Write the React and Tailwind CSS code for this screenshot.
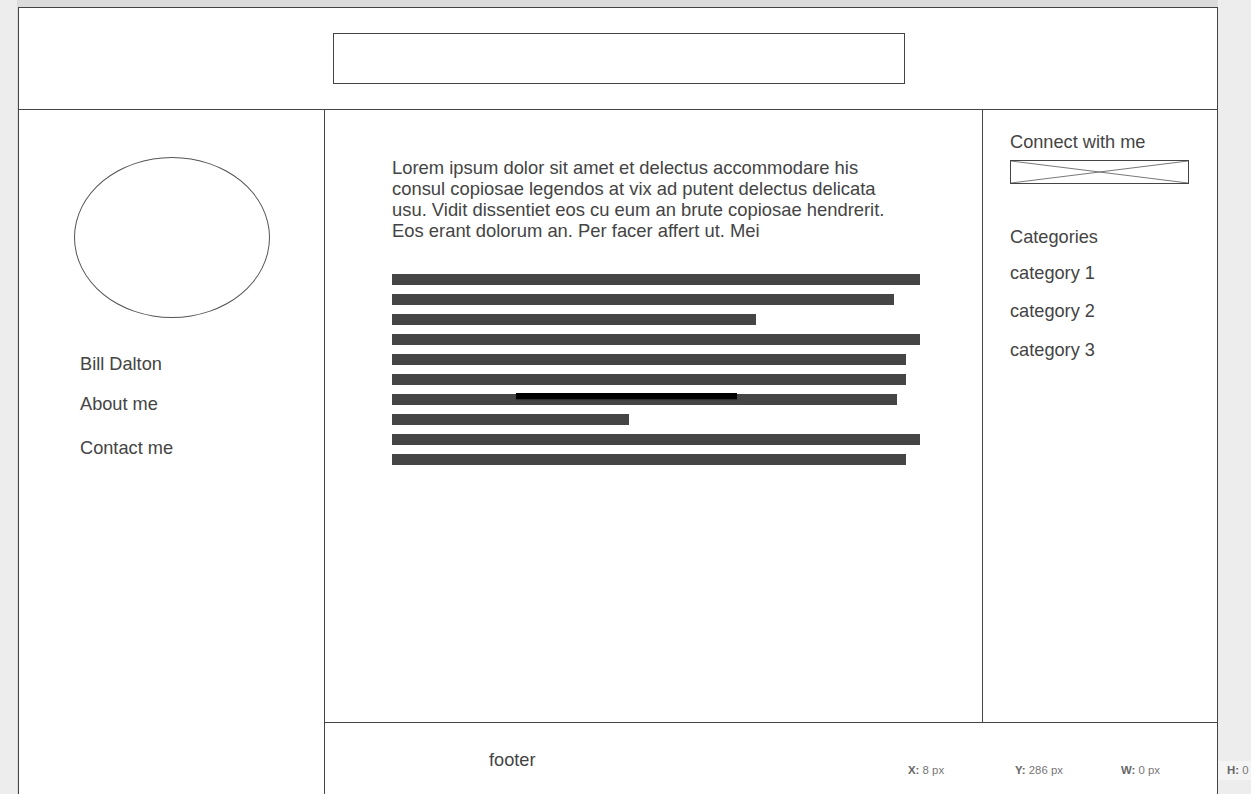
export default function App() {
  const bars = [528, 502, 364, 528, 514, 514, 505, 237, 528, 514];
  const font = { fontFamily: '"Liberation Sans", Arial, sans-serif' };
  return (
    <div className="relative w-[1251px] h-[794px] overflow-hidden bg-[#ededed] text-[#444]" style={font}>
      <div className="ml-[17px] w-[1201px] bg-[#dcdcdc] pt-[7px]">
        <div className="ml-[1px] w-[1200px] h-[900px] border border-[#444] bg-white flex flex-col">
          <header className="h-[102px] shrink-0 border-b border-[#444] flex items-center justify-center">
            <div className="w-[572px] h-[51px] border border-[#444] ml-[2px]"></div>
          </header>
          <div className="flex flex-1">
            <aside className="w-[306px] shrink-0 border-r border-[#444] flex flex-col">
              <div className="mt-[47px] mx-auto w-[196px] h-[161px] rounded-[50%] border border-[#555]"></div>
              <div className="pl-[61px] mt-[36px] text-[18.2px] leading-[21px]">
                <div>Bill Dalton</div>
                <div className="mt-[19px]">About me</div>
                <div className="mt-[23px]">Contact me</div>
              </div>
            </aside>
            <div className="flex-1 flex flex-col">
              <div className="h-[613px] shrink-0 flex border-b border-[#444]">
                <main className="w-[658px] shrink-0 border-r border-[#444] pl-[67px] pt-[47px]">
                  <p className="w-[505px] text-[18.4px] leading-[21px]">
                    Lorem ipsum dolor sit amet et delectus accommodare his consul copiosae legendos at vix ad putent delectus delicata usu. Vidit dissentiet eos cu eum an brute copiosae hendrerit. Eos erant dolorum an. Per facer affert ut. Mei
                  </p>
                  <div className="mt-[33px] flex flex-col gap-[9px]">
                    {bars.map((w, i) => (
                      <div key={i} className="relative h-[11px] bg-[#454545]" style={{ width: w }}>
                        {i === 6 && (
                          <div className="absolute left-[124px] top-[-1px] w-[221px] h-[6px] bg-black shadow-[0_1px_1px_rgba(0,0,0,0.3)]"></div>
                        )}
                      </div>
                    ))}
                  </div>
                </main>
                <section className="flex-1 pl-[27px] pt-[22px] text-[18.2px] leading-[21px]">
                  <div>Connect with me</div>
                  <div className="mt-[7px] w-[179px] h-[24px] border border-[#444]">
                    <svg width="177" height="22" viewBox="0 0 177 22" className="block">
                      <line x1="0" y1="0" x2="177" y2="22" stroke="#555" strokeWidth="0.8" />
                      <line x1="0" y1="22" x2="177" y2="0" stroke="#555" strokeWidth="0.8" />
                    </svg>
                  </div>
                  <div className="mt-[43px]">Categories</div>
                  <div className="mt-[15px]">category 1</div>
                  <div className="mt-[17px]">category 2</div>
                  <div className="mt-[18px]">category 3</div>
                </section>
              </div>
              <footer className="pl-[164px] pt-[27px] text-[18.2px] leading-[21px]">footer</footer>
            </div>
          </div>
        </div>
      </div>
      <div className="absolute left-0 top-[761px] w-full h-[19px] flex items-center text-[11.4px] text-[#777]">
        <span className="absolute left-[908px]"><b className="font-bold text-[#666]">X:</b> 8 px</span>
        <span className="absolute left-[1015px]"><b className="font-bold text-[#666]">Y:</b> 286 px</span>
        <span className="absolute left-[1121px]"><b className="font-bold text-[#666]">W:</b> 0 px</span>
        <span className="absolute left-[1218px] h-[19px] w-[40px] bg-[#f4f4f4] pl-[9px] flex items-center"><b className="font-bold text-[#666]">H:</b>&nbsp;0</span>
      </div>
    </div>
  );
}
